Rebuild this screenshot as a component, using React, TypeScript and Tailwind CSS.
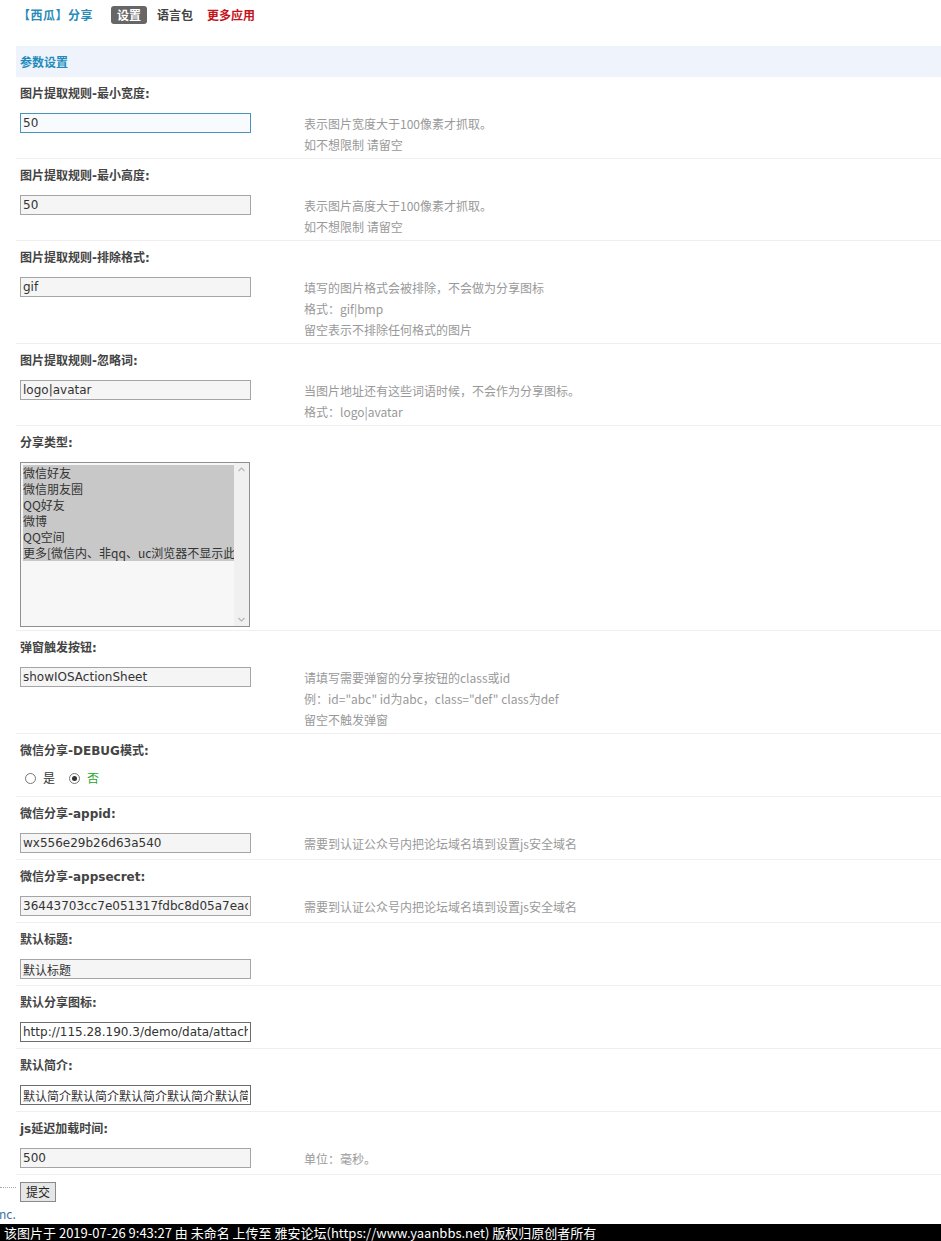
import React from "react";

type Row = {
  label: string;
  type?: "input" | "select" | "radio";
  value?: string;
  focus?: boolean;
  dark?: boolean;
  tips?: string[];
};

const rows: Row[] = [
  { label: "图片提取规则-最小宽度:", value: "50", focus: true, tips: ["表示图片宽度大于100像素才抓取。", "如不想限制 请留空"] },
  { label: "图片提取规则-最小高度:", value: "50", tips: ["表示图片高度大于100像素才抓取。", "如不想限制 请留空"] },
  {
    label: "图片提取规则-排除格式:",
    value: "gif",
    tips: ["填写的图片格式会被排除，不会做为分享图标", "格式：gif|bmp", "留空表示不排除任何格式的图片"],
  },
  { label: "图片提取规则-忽略词:", value: "logo|avatar", tips: ["当图片地址还有这些词语时候，不会作为分享图标。", "格式：logo|avatar"] },
  { label: "分享类型:", type: "select" },
  {
    label: "弹窗触发按钮:",
    value: "showIOSActionSheet",
    tips: ["请填写需要弹窗的分享按钮的class或id", '例：id="abc" id为abc，class="def" class为def', "留空不触发弹窗"],
  },
  { label: "微信分享-DEBUG模式:", type: "radio" },
  { label: "微信分享-appid:", value: "wx556e29b26d63a540", tips: ["需要到认证公众号内把论坛域名填到设置js安全域名"] },
  { label: "微信分享-appsecret:", value: "36443703cc7e051317fdbc8d05a7eac1", tips: ["需要到认证公众号内把论坛域名填到设置js安全域名"] },
  { label: "默认标题:", value: "默认标题" },
  { label: "默认分享图标:", value: "http://115.28.190.3/demo/data/attachment/common/logo.png", dark: true },
  { label: "默认简介:", value: "默认简介默认简介默认简介默认简介默认简介默认简介", dark: true },
  { label: "js延迟加载时间:", value: "500", tips: ["单位：毫秒。"] },
];

const shareTypes = ["微信好友", "微信朋友圈", "QQ好友", "微博", "QQ空间", "更多[微信内、非qq、uc浏览器不显示此项]"];

const cjk = "font-['Noto_Sans_CJK_SC',sans-serif]";
const mixed = "font-['DejaVu_Sans','Noto_Sans_CJK_SC',sans-serif]";

function TextInput({ row }: { row: Row }) {
  const tone = row.focus
    ? "border-[#4a93bd] bg-[#f7fbfd]"
    : row.dark
    ? "border-[#6d6d6d] bg-white"
    : "border-[#a5a5a5] bg-[#f5f5f5]";
  return (
    <input
      readOnly
      value={row.value}
      className={`block w-[231px] h-[20px] border ${tone} px-[2px] text-[12px] text-[#333] outline-none ${mixed}`}
    />
  );
}

function ShareSelect() {
  return (
    <div className="flex w-[230px] h-[165px] border border-[#8f8f8f] bg-[#f7f7f7]">
      <div className="flex-1 min-w-0 pt-[2px] pl-[2px]">
        {shareTypes.map((t) => (
          <div key={t} className={`bg-[#c8c8c8] text-[12px] leading-[16px] h-[16px] text-[#333] whitespace-nowrap overflow-x-clip ${cjk}`}>
            {t}
          </div>
        ))}
      </div>
      <div className="w-[15px] bg-[#f0f0f0] flex flex-col justify-between items-center py-[2px]">
        <svg width="9" height="9" viewBox="0 0 9 9">
          <path d="M1.5 6 L4.5 3 L7.5 6" fill="none" stroke="#b5b5b5" strokeWidth="1.2" />
        </svg>
        <svg width="9" height="9" viewBox="0 0 9 9">
          <path d="M1.5 3 L4.5 6 L7.5 3" fill="none" stroke="#b5b5b5" strokeWidth="1.2" />
        </svg>
      </div>
    </div>
  );
}

function Radio({ on }: { on?: boolean }) {
  return (
    <span className="w-[11px] h-[11px] rounded-full border border-[#777] bg-white flex items-center justify-center">
      {on && <span className="w-[5px] h-[5px] rounded-full bg-[#333]" />}
    </span>
  );
}

function DebugRadios() {
  return (
    <div className={`flex items-center h-[22px] pl-[5px] pb-[6px] text-[12px] ${cjk}`}>
      <Radio />
      <span className="ml-[7px] text-[#333]">是</span>
      <span className="ml-[14px]">
        <Radio on />
      </span>
      <span className="ml-[7px] text-[#2aa52a]">否</span>
    </div>
  );
}

export default function App() {
  return (
    <div className={`min-h-[1241px] bg-white flex flex-col ${cjk}`}>
      {/* top tabs */}
      <div className="h-[30px] flex items-center pl-[18px] text-[12px] font-bold">
        <span className="text-[#2a8ab8] tracking-[0.5px]">【西瓜】分享</span>
        <span className="ml-[18px] bg-[#666] text-white rounded-[3px] px-[6px] leading-[18px]">设置</span>
        <span className="ml-[10px] text-[#444]">语言包</span>
        <span className="ml-[14px] text-[#c4121b]">更多应用</span>
      </div>

      <div className="pl-4 mt-[16px]">
        <div className="h-[31px] bg-[#eff4fc] flex items-center pl-[4px] text-[12px] font-bold text-[#1f8bbb]">参数设置</div>

        {rows.map((row) => (
          <div key={row.label} className="border-b border-[#efefef]">
            <div className={`h-[30px] flex items-center pt-1 pl-[4px] text-[12px] font-bold text-[#444] ${mixed}`}>
              {row.label}
            </div>
            <div className="flex pt-[6px] pb-[3px] min-h-[32px]">
              <div className="w-[284px] shrink-0 pl-[4px]">
                {row.type === "select" ? <ShareSelect /> : row.type === "radio" ? <DebugRadios /> : <TextInput row={row} />}
              </div>
              {row.tips && (
                <div className="pl-[4px] text-[12px] leading-[21px] text-[#999]">
                  {row.tips.map((t) => (
                    <div key={t}>{t}</div>
                  ))}
                </div>
              )}
            </div>
          </div>
        ))}
      </div>

      <div className="flex items-start mt-[7px]">
        <span className="w-[16px] mt-[5px] border-t border-dotted border-[#aaa]" />
        <button className={`ml-[4px] w-[36px] h-[20px] border border-[#8a8a8a] bg-[#e6e6e6] text-[12px] text-[#222] ${cjk}`}>
          提交
        </button>
      </div>
      <div className="text-[12px] leading-[16px] text-[#3d6fa3] mt-[4px] -ml-[1px]">nc.</div>

      <div className="h-[17px] bg-black text-white text-[13px] leading-[17px] pl-[4px] whitespace-nowrap mt-auto">
        该图片于 2019-07-26 9:43:27 由 未命名 上传至 雅安论坛(https://www.yaanbbs.net) 版权归原创者所有
      </div>
    </div>
  );
}
